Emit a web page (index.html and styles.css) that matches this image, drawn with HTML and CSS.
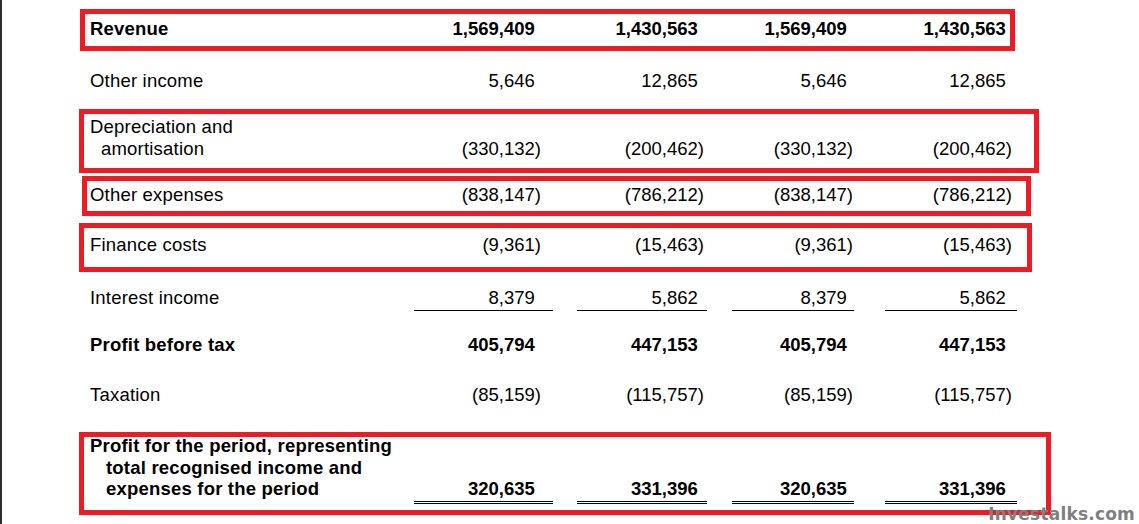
FILE: index.html
```html
<!DOCTYPE html>
<html lang="en">
<head>
<meta charset="utf-8">
<title>Income statement</title>
<link rel="stylesheet" href="styles.css">
</head>
<body>
<div class="page">
  <div class="sheet">
    <div class="row bold r-revenue">
      <div class="label">Revenue</div>
      <div class="num c1 pos">1,569,409</div>
      <div class="num c2 pos">1,430,563</div>
      <div class="num c3 pos">1,569,409</div>
      <div class="num c4 pos">1,430,563</div>
    </div>
    <div class="row r-other-income">
      <div class="label">Other income</div>
      <div class="num c1 pos">5,646</div>
      <div class="num c2 pos">12,865</div>
      <div class="num c3 pos">5,646</div>
      <div class="num c4 pos">12,865</div>
    </div>
    <div class="row r-dep">
      <div class="label"><span class="line">Depreciation and</span><span class="line indent-s">amortisation</span></div>
      <div class="num c1">(330,132)</div>
      <div class="num c2">(200,462)</div>
      <div class="num c3">(330,132)</div>
      <div class="num c4">(200,462)</div>
    </div>
    <div class="row r-other-exp">
      <div class="label">Other expenses</div>
      <div class="num c1">(838,147)</div>
      <div class="num c2">(786,212)</div>
      <div class="num c3">(838,147)</div>
      <div class="num c4">(786,212)</div>
    </div>
    <div class="row r-finance">
      <div class="label">Finance costs</div>
      <div class="num c1">(9,361)</div>
      <div class="num c2">(15,463)</div>
      <div class="num c3">(9,361)</div>
      <div class="num c4">(15,463)</div>
    </div>
    <div class="row r-interest underlined">
      <div class="label">Interest income</div>
      <div class="num c1 pos">8,379</div>
      <div class="num c2 pos">5,862</div>
      <div class="num c3 pos">8,379</div>
      <div class="num c4 pos">5,862</div>
    </div>
    <div class="row bold r-pbt">
      <div class="label">Profit before tax</div>
      <div class="num c1 pos">405,794</div>
      <div class="num c2 pos">447,153</div>
      <div class="num c3 pos">405,794</div>
      <div class="num c4 pos">447,153</div>
    </div>
    <div class="row r-tax">
      <div class="label">Taxation</div>
      <div class="num c1">(85,159)</div>
      <div class="num c2">(115,757)</div>
      <div class="num c3">(85,159)</div>
      <div class="num c4">(115,757)</div>
    </div>
    <div class="row bold r-profit double">
      <div class="label"><span class="line">Profit for the period, representing</span><span class="line indent-l">total recognised income and</span><span class="line indent-l">expenses for the period</span></div>
      <div class="num c1 pos">320,635</div>
      <div class="num c2 pos">331,396</div>
      <div class="num c3 pos">320,635</div>
      <div class="num c4 pos">331,396</div>
    </div>
  </div>

  <div class="mark mark-revenue"></div>
  <div class="mark mark-dep"></div>
  <div class="mark mark-other-exp"></div>
  <div class="mark mark-finance"></div>
  <div class="mark mark-profit"></div>

  <div class="watermark">Investalks.com</div>
</div>
</body>
</html>
```

FILE: styles.css
```css
* { box-sizing: border-box; }

html, body {
  margin: 0;
  padding: 0;
  background: #ffffff;
}

.page {
  position: relative;
  width: 1139px;
  height: 524px;
  overflow: hidden;
  border-left: 2px solid #2e2e2e;
  background: #ffffff;
  font-family: "Liberation Sans", Arial, sans-serif;
  font-size: 18.5px;
  color: #000000;
}

.sheet {
  padding: 18px 0 0 88px;
  display: flex;
  flex-direction: column;
}

.row {
  display: grid;
  grid-template-columns: 324px 139px 154px 147px 163px;
  align-items: last baseline;
  line-height: 22px;
}

.bold { font-weight: bold; }

.label {
  letter-spacing: 0.2px;
  white-space: nowrap;
}

.line { display: block; }
.indent-s { padding-left: 11px; }
.indent-l { padding-left: 16px; }

.num {
  text-align: right;
  white-space: nowrap;
}

.pos::after {
  content: ")";
  visibility: hidden;
}

.c1 { padding-right: 12px; }
.c2 { margin-left: 24px; padding-right: 3px; }
.c3 { margin-left: 25px; padding-right: 1px; }
.c4 { margin-left: 31px; padding-right: 5px; }

.underlined .num {
  padding-bottom: 1px;
  border-bottom: 1px solid #000000;
}

.double .num {
  padding-bottom: 0.5px;
  border-bottom: 3px double #000000;
}

.r-other-income { margin-top: 30px; }
.r-dep { margin-top: 24px; }
.r-other-exp { margin-top: 24px; }
.r-finance { margin-top: 28px; }
.r-interest { margin-top: 31px; }
.r-pbt { margin-top: 23px; }
.r-tax { margin-top: 28px; }
.r-profit { margin-top: 29px; }
.r-profit .label { line-height: 21.5px; }

/* red annotation boxes drawn over the statement */
.mark {
  position: absolute;
  border: 5px solid #ed1c24;
}
.mark-revenue   { left: 78px; top: 9px;   width: 935px; height: 42px; }
.mark-dep       { left: 77px; top: 109px; width: 960px; height: 64px; }
.mark-other-exp { left: 80px; top: 176px; width: 949px; height: 40px; }
.mark-finance   { left: 77px; top: 223px; width: 953px; height: 49px; }
.mark-profit    { left: 77px; top: 432px; width: 972px; height: 83px; }

.watermark {
  position: absolute;
  right: 4px;
  top: 506px;
  font-family: "DejaVu Sans", Verdana, sans-serif;
  font-weight: bold;
  font-size: 17px;
  line-height: 17px;
  letter-spacing: 0.2px;
  color: #7f7f7f;
}
```
